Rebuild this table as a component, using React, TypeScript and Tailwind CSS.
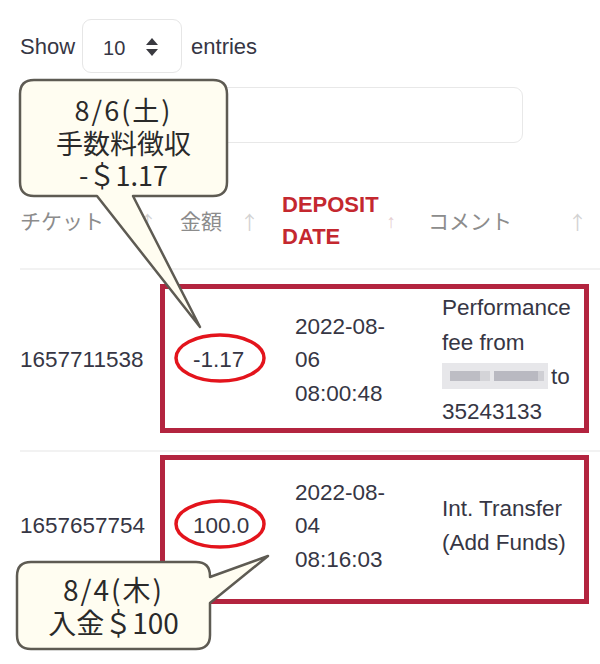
import React from "react"

const latin = "font-['Liberation_Sans','Noto_Sans_CJK_JP',sans-serif]"
const jp = "font-['Noto_Sans_CJK_JP',sans-serif]"

function SortIcon() {
  return (
    <svg width="14" height="20" viewBox="0 0 14 20">
      <path d="M7 1 L13 8 H1 Z" fill="#3a3a40" />
      <path d="M7 19 L13 12 H1 Z" fill="#3a3a40" />
    </svg>
  )
}

function Arrow({ className = "" }: { className?: string }) {
  return <span className={`text-[19px] leading-none text-[#d2d2d2] ${className}`}>↑</span>
}

function Blurred() {
  return (
    <span className="inline-flex items-center w-[106px] h-[26px] bg-[#e7e7ea] align-middle mr-[3px] -mt-[4px]">
      <span className="ml-[8px] w-[30px] h-[10px] bg-[#bdbdc4]" />
      <span className="w-[10px] h-[10px] bg-[#d4d4d8]" />
      <span className="ml-[4px] w-[44px] h-[10px] bg-[#b9b9c1]" />
      <span className="w-[6px] h-[10px] bg-[#cfcfd4]" />
    </span>
  )
}

export default function App() {
  return (
    <div className={`relative w-[600px] h-[664px] overflow-hidden bg-white text-[#363644] ${latin}`}>
      <div className="pl-5 pt-[19px]">
        {/* length + search */}
        <div className="flex items-center h-[54px] text-[22px]">
          <span>Show</span>
          <div className="ml-[7px] w-[100px] h-[54px] rounded-[9px] border-[1.5px] border-[#e6e6e6] flex items-center pl-[20px]">
            <span className="text-[20px] mt-[3px]">10</span>
            <span className="ml-[20px] mt-[1px]">
              <SortIcon />
            </span>
          </div>
          <span className="ml-[9px]">entries</span>
        </div>
        <div className="mt-[14px] ml-[180px] w-[323px] h-[56px] rounded-[9px] border-[1.5px] border-[#e8e8e8]" />

        {/* table */}
        <div className="mt-[46px]">
          <div className="grid grid-cols-[160px_102px_146px_160px] items-center pb-[15px] border-b-2 border-[#f2f2f2]">
            <div className={`flex items-center text-[21px] text-[#8c8c8c] ${jp}`}>
              <span>チケット</span>
              <Arrow className="ml-[34px]" />
            </div>
            <div className={`flex items-center text-[21px] text-[#8c8c8c] ${jp}`}>
              <span>金額</span>
              <Arrow className="ml-[18px]" />
            </div>
            <div className="flex items-center">
              <span className="text-[22px] font-bold leading-[32px] text-[#c4282f]">
                DEPOSIT
                <br />
                DATE
              </span>
              <Arrow className="ml-[8px] text-[#e6cfd2]" />
            </div>
            <div className={`flex items-center text-[21px] text-[#8c8c8c] ${jp}`}>
              <span>コメント</span>
              <Arrow className="ml-[56px]" />
            </div>
          </div>

          <div className="grid grid-cols-[160px_102px_146px_172px] items-center h-[182px] border-b-2 border-[#f2f2f2] text-[22.5px]">
            <div>1657711538</div>
            <div className="pl-[13px]">-1.17</div>
            <div className="pl-[13px] leading-[33.5px]">
              2022-08-
              <br />
              06
              <br />
              08:00:48
            </div>
            <div className="pl-[14px] leading-[34.5px]">
              Performance
              <br />
              fee from
              <br />
              <Blurred />
              to
              <br />
              35243133
            </div>
          </div>

          <div className="grid grid-cols-[160px_102px_146px_172px] items-center h-[148px] text-[22.5px]">
            <div>1657657754</div>
            <div className="pl-[13px]">100.0</div>
            <div className="pl-[13px] leading-[33.5px]">
              2022-08-
              <br />
              04
              <br />
              08:16:03
            </div>
            <div className="pl-[14px] leading-[34.5px]">
              Int. Transfer
              <br />
              (Add Funds)
            </div>
          </div>
        </div>
      </div>

      {/* annotations */}
      <div className="absolute left-[160px] top-[284px] w-[429px] h-[149px] border-[5px] border-[#b3243f]" />
      <div className="absolute left-[160px] top-[455px] w-[429px] h-[149px] border-[5px] border-[#b3243f]" />

      <svg className="absolute left-0 top-0 pointer-events-none" width="600" height="664">
        <ellipse cx="220" cy="358" rx="44" ry="23" fill="none" stroke="#e3141c" strokeWidth="3.5" />
        <ellipse cx="220" cy="524" rx="44" ry="23" fill="none" stroke="#e3141c" strokeWidth="3.5" />
        <path
          d="M34 80 H213 Q227 80 227 94 V182 Q227 196 213 196 H133 L200 327 L97 196 H34 Q20 196 20 182 V94 Q20 80 34 80 Z"
          fill="#fffdf1"
          stroke="#5e5b53"
          strokeWidth="2.5"
          strokeLinejoin="round"
        />
        <path
          d="M31 562 H196 Q210 562 210 576 V577 L268 556 L210 603 V635 Q210 649 196 649 H31 Q17 649 17 635 V576 Q17 562 31 562 Z"
          fill="#fffdf1"
          stroke="#5e5b53"
          strokeWidth="2.5"
          strokeLinejoin="round"
        />
      </svg>

      <div
        className={`absolute left-[20px] top-[94px] w-[207px] flex flex-col items-center text-[27px] leading-[32.5px] text-[#2a2a2a] ${jp}`}
      >
        <span className="tracking-[2px]">8/6(土)</span>
        <span>手数料徴収</span>
        <span>-＄1.17</span>
      </div>
      <div
        className={`absolute left-[17px] top-[573px] w-[193px] flex flex-col items-center text-[28px] leading-[33px] text-[#2a2a2a] ${jp}`}
      >
        <span className="tracking-[2px]">8/4(木)</span>
        <span>入金＄100</span>
      </div>
    </div>
  )
}
